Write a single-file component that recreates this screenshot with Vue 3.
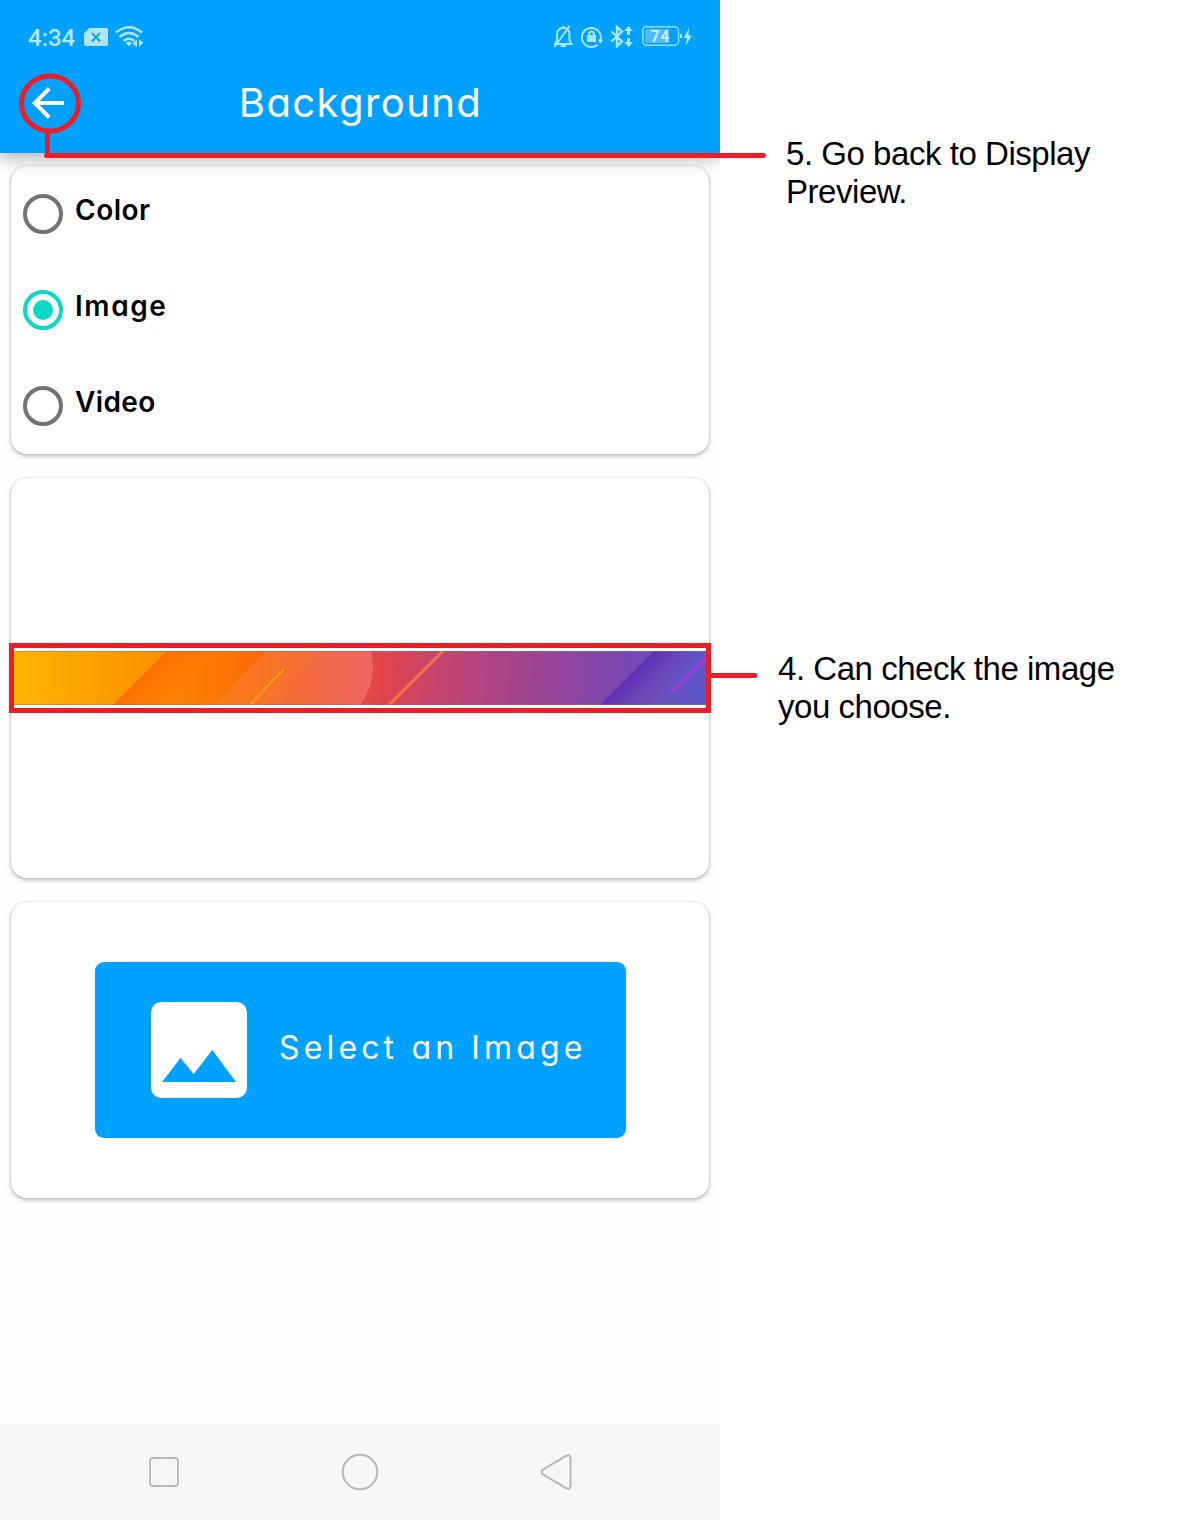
<script setup>
import { ref } from 'vue'

const options = ['Color', 'Image', 'Video']
const selected = ref('Image')
</script>

<template>
  <main class="page">
    <section class="phone">
      <header class="header">
        <div class="status">
          <span class="time">4:34</span>
          <svg class="left-icons" width="64" height="28" viewBox="84 24 64 28">
            <path d="M89.500 28H106q2 0 2 2v14q0 2-2 2H86q-2 0-2-2V33.500Z" fill="#afe5ff" />
            <path d="M92 33l8 8.500M100 33l-8 8.500" stroke="#1e9fe8" stroke-width="2" />
            <g fill="none" stroke="#afe5ff" stroke-width="2.500">
              <path d="M116 32.500Q129 22 142 32.500" />
              <path d="M119.500 37Q129 29 138.500 37" />
              <path d="M123.500 41Q129 36.500 134.500 41" />
            </g>
            <path d="M125.500 43Q129 40 132 43L129 46ZM137 39.500V47L132.500 43.800ZM139 39.500L143.500 42.500L139 47Z" fill="#afe5ff" />
          </svg>
          <svg class="right-icons" width="142" height="28" viewBox="552 24 142 28">
            <g fill="none" stroke="#a9e5ff" stroke-width="2">
              <path d="M555 44H571.500L569.500 40.500V34Q569 28 563.500 28Q557.500 28 557 34V40.500ZM563.500 28V26M560.500 46H566M569.500 26L554.500 47" />
              <path d="M597.500 44.700A9.500 9.500 0 1 1 600.500 40" />
              <path d="M589 36V34Q589 31.500 591.500 31.500T594 34V36" />
              <path d="M611.500 31.500L622 41.500L617 46V27L622 31.500L611.500 41.500" stroke-width="2.400" />
            </g>
            <path d="M587 35H596V42H587ZM597.500 39.500H603L600.500 44ZM628.500 26L633 31H630V35H627V31H624ZM628.500 47L633 42H630V38H627V42H624Z" fill="#a9e5ff" />
            <rect x="642.700" y="26.700" width="35.800" height="18.500" rx="4" fill="none" stroke="#91dcff" stroke-width="1.500" />
            <rect x="645" y="29" width="24" height="14" rx="1" fill="#51b9f8" />
            <text x="650.500" y="42" class="battery">74</text>
            <path d="M680 34H682V38H680ZM689 28L683.500 38H687L685.500 46L692 35.500H688.500Z" fill="#a9e5ff" />
          </svg>
        </div>
        <div class="toolbar">
          <svg class="back" width="32" height="32" viewBox="0 0 32 32">
            <path d="M32 16H3M17.300 1.500L2.800 16L17.300 30.500" fill="none" stroke="#fff" stroke-width="4" />
          </svg>
          <h1 class="title">Background</h1>
        </div>
      </header>

      <div class="content">
        <div class="card options">
          <label v-for="o in options" :key="o" class="option" @click="selected = o">
            <span class="radio" :class="{ on: selected === o }"></span>
            <span class="label" :class="o.toLowerCase()">{{ o }}</span>
          </label>
        </div>

        <div class="card preview">
          <div class="frame">
            <svg class="banner" width="692" height="54" viewBox="14 651 692 54">
              <defs>
                <linearGradient id="base" gradientUnits="userSpaceOnUse" x1="14" y1="660" x2="706" y2="690">
                  <stop offset="0" stop-color="#ffb500" />
                  <stop offset=".2" stop-color="#fc9200" />
                  <stop offset=".34" stop-color="#fb7012" />
                  <stop offset=".45" stop-color="#ec5347" />
                  <stop offset=".535" stop-color="#df444b" />
                  <stop offset=".62" stop-color="#c34471" />
                  <stop offset=".77" stop-color="#974496" />
                  <stop offset=".88" stop-color="#7848b1" />
                  <stop offset="1" stop-color="#5a56ca" />
                </linearGradient>
                <linearGradient id="fold" gradientUnits="userSpaceOnUse" x1="139" y1="678" x2="166" y2="704">
                  <stop offset="0" stop-color="#fa7000" />
                  <stop offset="1" stop-color="#ff8303" />
                </linearGradient>
                <linearGradient id="deep" gradientUnits="userSpaceOnUse" x1="164" y1="0" x2="266" y2="0">
                  <stop offset="0" stop-color="#fb6a00" stop-opacity="0" />
                  <stop offset="1" stop-color="#f8600c" stop-opacity=".8" />
                </linearGradient>
                <linearGradient id="panel" gradientUnits="userSpaceOnUse" x1="220" y1="0" x2="374" y2="0">
                  <stop offset="0" stop-color="#fd7c14" />
                  <stop offset=".5" stop-color="#f56f34" />
                  <stop offset="1" stop-color="#f16866" />
                </linearGradient>
                <linearGradient id="violet" gradientUnits="userSpaceOnUse" x1="627" y1="678" x2="654" y2="705">
                  <stop offset="0" stop-color="#5b2eb5" />
                  <stop offset="1" stop-color="#7249b5" stop-opacity="0" />
                </linearGradient>
              </defs>
              <rect x="14" y="651" width="692" height="54" fill="url(#base)" />
              <path d="M167 651H267L213 705H113Z" fill="url(#fold)" />
              <path d="M167 651H267L213 705H113Z" fill="url(#deep)" />
              <path d="M267 651H371Q378 680 360 705H213Z" fill="url(#panel)" />
              <path d="M324 651H371Q378 680 360 705H270Z" fill="#e45261" opacity=".12" />
              <path d="M250 705L284 669" stroke="#ff9518" stroke-width="2.500" />
              <path d="M389 705L443 651" stroke="#f46f46" stroke-width="3" />
              <path d="M654 651H706V705H600Z" fill="url(#violet)" />
              <path d="M672 692L706 658" stroke="#a23be0" stroke-width="3" />
              <path d="M14 651.500H706M14 704.500H706" stroke="#777" stroke-opacity=".45" />
            </svg>
          </div>
        </div>

        <div class="card action">
          <button class="select">
            <svg width="96" height="96" viewBox="0 0 96 96">
              <rect width="96" height="96" rx="10.500" fill="#fff" />
              <path d="M11 80L29.500 56L42.700 72L61.300 48L85 80Z" fill="#00a1ff" />
            </svg>
            <span class="select-text">Select an Image</span>
          </button>
        </div>
      </div>

      <nav class="nav">
        <svg width="720" height="96" viewBox="0 0 720 96" fill="none" stroke="#b9b9b9" stroke-width="2">
          <rect x="150" y="34" width="28" height="28" rx="3" />
          <circle cx="360" cy="48" r="17.300" />
          <path d="M543 45.600L566 32Q570.300 30 570.500 34V62Q570.300 66 566 64L543 50.400Q540 48 543 45.600Z" />
        </svg>
      </nav>
    </section>

    <aside class="notes">
      <p class="note back-note">5. Go back to Display<br />Preview.</p>
      <p class="note image-note">4. Can check the image<br />you choose.</p>
    </aside>

    <svg class="callouts" width="780" height="720" viewBox="0 0 780 720" fill="none" stroke="#ee1c25" stroke-width="5">
      <ellipse cx="50" cy="103.500" rx="28.500" ry="27.500" />
      <path d="M47.500 132V155.500M46.500 155.500H763.500M711 675.500H755" stroke-linecap="round" />
    </svg>
  </main>
</template>

<style>
body {
  margin: 0;
  background: #fff;
}
</style>

<style scoped>
.page {
  position: relative;
  display: flex;
  width: 1196px;
  height: 1520px;
  overflow: hidden;
  background: #fff;
}
.phone {
  display: flex;
  flex-direction: column;
  width: 720px;
  height: 1520px;
  overflow: hidden;
  background: #fefefe;
  font-family: Inter, "Open Sans", sans-serif;
  font-feature-settings: "cv11", "ss03";
}
.header {
  position: relative;
  z-index: 1;
  height: 153px;
  background: #00a1ff;
  box-shadow: 0 4px 18px rgba(0, 0, 0, .34);
}
.status {
  display: flex;
  align-items: center;
  height: 76px;
  padding: 0 26px 0 28px;
}
.time {
  width: 56px;
  font: 500 24px/28px Roboto, sans-serif;
  color: #b3e6ff;
}
.right-icons {
  margin-left: auto;
}
.battery {
  font: 700 16px Roboto, sans-serif;
  letter-spacing: .5px;
  fill: #c5eeff;
}
.toolbar {
  display: flex;
  align-items: center;
  height: 54px;
  padding: 0 32px;
}
.title {
  flex: 1;
  margin: 0 31px 0 0;
  font-size: 40px;
  line-height: 54px;
  font-weight: 400;
  letter-spacing: 1.4px;
  color: #fff;
  text-align: center;
}
.content {
  display: flex;
  flex: 1;
  flex-direction: column;
  gap: 24px;
  padding: 13px 11px 0;
}
.card {
  box-sizing: border-box;
  border-radius: 16px;
  background: #fff;
  box-shadow: 0 2px 4px rgba(0, 0, 0, .28), 0 0 2px rgba(0, 0, 0, .16);
}
.options {
  height: 288px;
}
.option {
  display: flex;
  height: 96px;
  padding: 0 12px;
  gap: 12px;
  align-items: center;
}
.radio {
  display: flex;
  box-sizing: border-box;
  width: 40px;
  height: 40px;
  border: 4px solid #737373;
  border-radius: 50%;
  align-items: center;
  justify-content: center;
}
.radio.on {
  border-color: #0dd8c4;
}
.radio.on::after {
  width: 20px;
  height: 20px;
  border-radius: 50%;
  background: #0dd8c4;
  content: "";
}
.label {
  padding-bottom: 9px;
  font-size: 28px;
  line-height: 36px;
  font-weight: 600;
  color: #050505;
}
.label.color {
  letter-spacing: .5px;
}
.label.image {
  letter-spacing: 1.6px;
}
.label.video {
  letter-spacing: .4px;
}
.preview {
  display: flex;
  height: 400px;
  align-items: center;
  justify-content: center;
}
.frame {
  display: flex;
  flex: none;
  box-sizing: border-box;
  width: 702px;
  height: 70px;
  border: 5px solid #ee1c25;
  padding-top: 3px;
  background: #fff;
}
.action {
  display: flex;
  height: 296px;
  align-items: center;
  justify-content: center;
}
.select {
  display: flex;
  box-sizing: border-box;
  width: 531px;
  height: 176px;
  margin-left: 1px;
  padding: 0 0 0 56px;
  border: 0;
  border-radius: 9px;
  align-items: center;
  gap: 32px;
  background: #00a1ff;
  color: #fff;
  font-family: inherit;
  font-feature-settings: inherit;
}
.select-text {
  padding-bottom: 5px;
  font-size: 32px;
  line-height: 40px;
  letter-spacing: 4.15px;
  white-space: nowrap;
}
.nav {
  height: 96px;
  background: #f7f7f7;
}
.notes {
  display: flex;
  flex-direction: column;
  padding: 135px 0 0 58px;
}
.note {
  margin: 0;
  font: 33px/38px "Liberation Sans", Arial, sans-serif;
  letter-spacing: -.46px;
  color: #000;
  white-space: nowrap;
}
.back-note {
  padding-left: 8px;
}
.image-note {
  margin-top: 439px;
}
.callouts {
  position: absolute;
  z-index: 2;
  top: 0;
  left: 0;
  pointer-events: none;
}
</style>
